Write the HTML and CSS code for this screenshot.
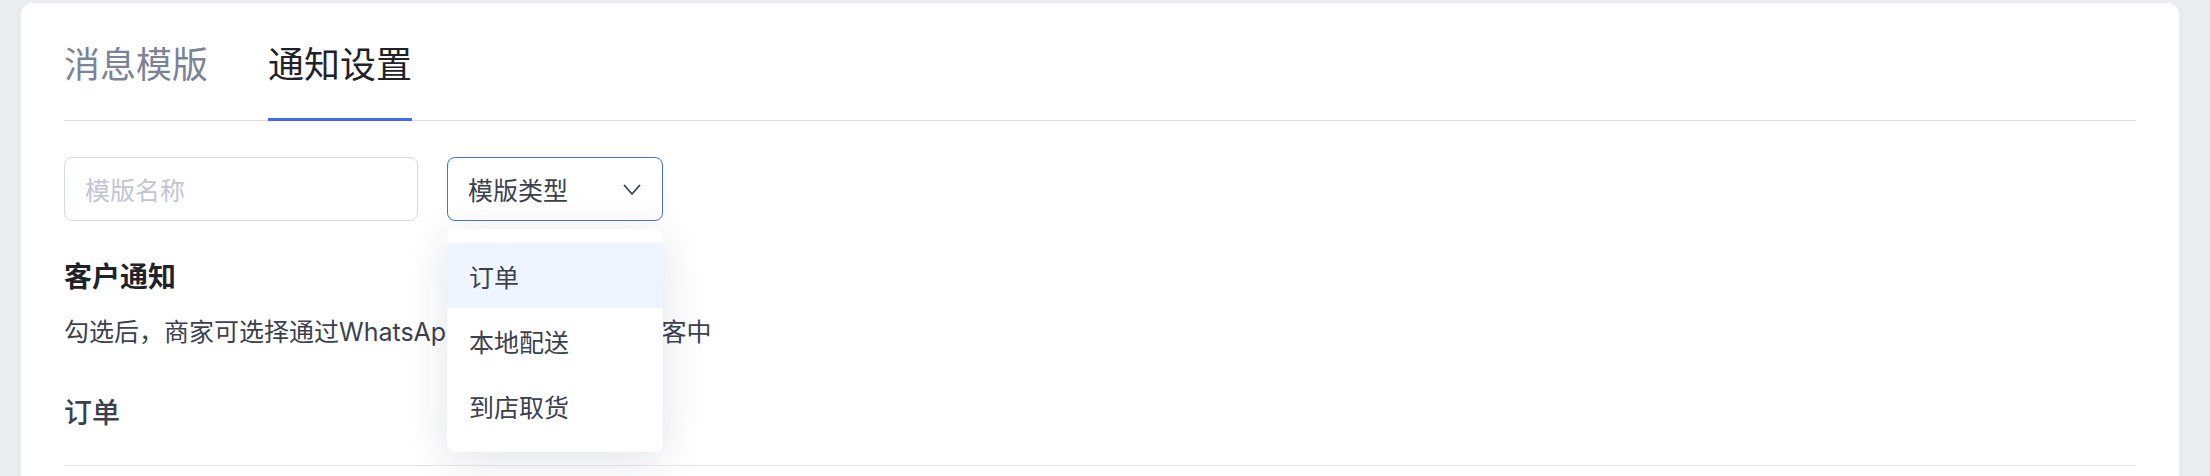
FILE: index.html
```html
<!DOCTYPE html>
<html lang="zh-CN">
<head>
<meta charset="utf-8">
<title>通知设置</title>
<link rel="stylesheet" href="styles.css">
</head>
<body>
<div class="card">
  <div class="tabs">
    <div class="tab">消息模版</div>
    <div class="tab active">通知设置</div>
  </div>
  <div class="filters">
    <div class="input"><span class="placeholder">模版名称</span></div>
    <div class="select-wrap">
      <div class="select">
        <span class="select-text">模版类型</span>
        <svg class="chevron" width="18" height="12" viewBox="0 0 18 12"><polyline points="1.5,1.5 9,10 16.5,1.5" fill="none" stroke="#3c414d" stroke-width="1.8" stroke-linecap="round" stroke-linejoin="round"/></svg>
      </div>
      <div class="dropdown">
        <div class="option hover">订单</div>
        <div class="option">本地配送</div>
        <div class="option">到店取货</div>
      </div>
    </div>
  </div>
  <div class="section">
    <div class="section-title">客户通知</div>
    <div class="section-desc">勾选后，商家可选择通过WhatsApp发送订单通知给顾客中</div>
    <div class="group-title">订单</div>
    <div class="divider"></div>
  </div>
</div>
</body>
</html>
```

FILE: styles.css
```css
* { box-sizing: border-box; }
html, body { margin: 0; padding: 0; }
body {
  background: #ebecf0;
  padding: 3px 31px 0 21px;
  font-family: Inter, "Noto Sans CJK SC", sans-serif;
  color: #1f2329;
  overflow: hidden;
  height: 476px;
}
.card {
  background: #ffffff;
  border-radius: 12px 12px 0 0;
  padding: 34px 43px 0 43px;
  height: 600px;
}
.tabs {
  display: flex;
  gap: 60px;
  border-bottom: 1px solid #dddee7;
}
.tab {
  font-family: "Noto Sans CJK SC", sans-serif;
  font-size: 36px;
  line-height: 50px;
  padding-bottom: 31px;
  border-bottom: 3px solid transparent;
  margin-bottom: -1px;
  color: #7c8396;
}
.tab.active {
  color: #1f2329;
  border-bottom-color: #3f6af2;
}
.filters {
  display: flex;
  gap: 29px;
  margin-top: 36px;
}
.input {
  width: 354px;
  height: 64px;
  border: 1px solid #d8dae6;
  border-radius: 8px;
  padding-left: 20px;
  display: flex;
  align-items: center;
}
.placeholder {
  font-family: "Noto Sans CJK SC", sans-serif;
  font-size: 25px;
  color: #c2c5d1;
}
.select-wrap {
  position: relative;
}
.select {
  width: 216px;
  height: 64px;
  border: 1px solid #4470f0;
  border-radius: 8px;
  padding: 0 21px 0 20px;
  display: flex;
  align-items: center;
  justify-content: space-between;
}
.select-text {
  font-family: "Noto Sans CJK SC", sans-serif;
  font-size: 25px;
  color: #3c414d;
}
.chevron { display: block; margin-top: 2px; }
.dropdown {
  position: absolute;
  top: 72px;
  left: 0;
  width: 216px;
  background: #ffffff;
  border-radius: 8px;
  padding: 14px 0;
  box-shadow: 0 8px 44px rgba(30, 40, 70, 0.13);
  z-index: 10;
}
.option {
  height: 65px;
  display: flex;
  align-items: center;
  padding-left: 22px;
  font-family: "Noto Sans CJK SC", sans-serif;
  font-size: 25px;
  color: #3c414d;
}
.option.hover {
  background: #eff5fe;
}
.section {
  padding-top: 34px;
}
.section-title {
  font-family: "Noto Sans CJK SC", sans-serif;
  font-size: 28px;
  font-weight: 700;
  line-height: 40px;
  color: #1f2329;
}
.section-desc {
  margin-top: 17px;
  font-size: 25px;
  line-height: 40px;
  color: #3c414d;
}
.group-title {
  margin-top: 39px;
  font-family: "Noto Sans CJK SC", sans-serif;
  font-size: 28px;
  font-weight: 500;
  line-height: 40px;
  color: #3c414d;
}
.divider {
  margin-top: 34px;
  height: 1px;
  background: #e6e7ee;
}
```
